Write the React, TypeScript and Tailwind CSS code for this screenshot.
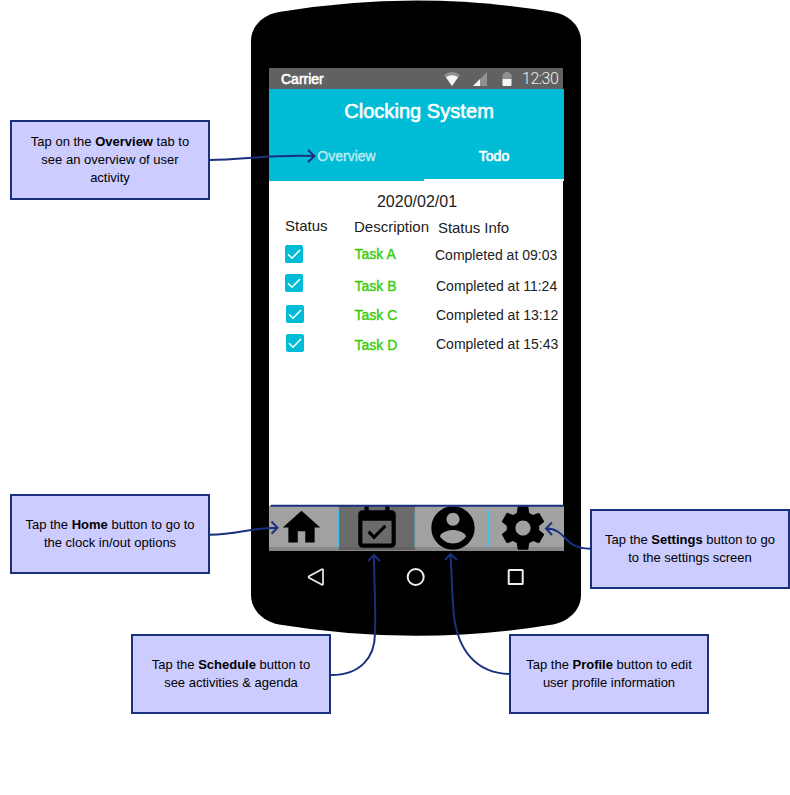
import type { ReactNode } from "react";

const NAVY = "#19307f";

const ICONS = {
  home: "M10 20v-6h4v6h5v-8h3L12 3 2 12h3v8z",
  schedule:
    "M16.53 11.06L15.47 10l-4.88 4.88-2.12-2.12-1.06 1.06L10.59 17l5.94-5.94zM19 3h-1V1h-2v2H8V1H6v2H5c-1.11 0-1.99.9-1.99 2L3 19c0 1.1.89 2 2 2h14c1.1 0 2-.9 2-2V5c0-1.1-.9-2-2-2zm0 16H5V8h14v11z",
  profile:
    "M12 2C6.48 2 2 6.48 2 12s4.48 10 10 10 10-4.48 10-10S17.52 2 12 2zm0 3c1.66 0 3 1.34 3 3s-1.34 3-3 3-3-1.34-3-3 1.34-3 3-3zm0 14.2c-2.5 0-4.71-1.28-6-3.22.03-1.99 4-3.08 6-3.08 1.99 0 5.97 1.09 6 3.08-1.29 1.94-3.5 3.22-6 3.22z",
  settings:
    "M19.43 12.98c.04-.32.07-.64.07-.98s-.03-.66-.07-.98l2.11-1.65c.19-.15.24-.42.12-.64l-2-3.46c-.12-.22-.39-.3-.61-.22l-2.49 1c-.52-.4-1.08-.73-1.69-.98l-.38-2.65C14.46 2.18 14.25 2 14 2h-4c-.25 0-.46.18-.49.42l-.38 2.65c-.61.25-1.17.59-1.69.98l-2.49-1c-.23-.09-.49 0-.61.22l-2 3.46c-.13.22-.07.49.12.64l2.11 1.65c-.04.32-.07.65-.07.98s.03.66.07.98l-2.11 1.65c-.19.15-.24.42-.12.64l2 3.46c.12.22.39.3.61.22l2.49-1c.52.4 1.08.73 1.69.98l.38 2.65c.03.24.24.42.49.42h4c.25 0 .46-.18.49-.42l.38-2.65c.61-.25 1.17-.59 1.69-.98l2.49 1c.23.09.49 0 .61-.22l2-3.46c.12-.22.07-.49-.12-.64l-2.11-1.65zM12 15.5c-1.93 0-3.5-1.57-3.5-3.5s1.57-3.5 3.5-3.5 3.5 1.57 3.5 3.5-1.57 3.5-3.5 3.5z",
};

function Glyph({ path, className }: { path: string; className: string }) {
  return (
    <svg viewBox="0 0 24 24" className={`shrink-0 ${className}`}>
      <path d={path} />
    </svg>
  );
}

function Callout({ className, children }: { className: string; children: ReactNode }) {
  return (
    <div
      className={`absolute flex h-20 w-[200px] items-center justify-center border-2 border-[#19307f] bg-[#ccccff] text-center text-[13px] leading-[18px] text-black ${className}`}
    >
      <p className="whitespace-nowrap">{children}</p>
    </div>
  );
}

function StatusBar() {
  return (
    <div className="flex h-[21px] w-[294px] items-center bg-[#616161] pl-3 text-white">
      <span className="w-[163px] text-sm leading-5 tracking-[0px] [-webkit-text-stroke:0.6px_white]">Carrier</span>
      <svg className="h-[14px] w-[70px] shrink-0" viewBox="0 0 70 14">
        <path d="M0 3Q8-3 16 3L8 14Z" fill="#919191" />
        <path d="M2 5.3Q8 1 14 5.3L8 14Z" fill="#f5f5f5" />
        <path d="M43 0V14H29Z" fill="#919191" />
        <path d="M36 7V14H29Z" fill="#f5f5f5" />
        <path d="M59.500 1.500h1.200V0h4.600v1.500h1.200q1 0 1 1V7h-9V2.500q0-1 1-1Z" fill="#919191" />
        <path d="M58.500 7h9v6q0 1-1 1h-7q-1 0-1-1Z" fill="#f5f5f5" />
      </svg>
      <span className="ml-[8px] whitespace-nowrap font-[Roboto,sans-serif] text-[16px] font-light leading-5 tracking-[-0.5px] text-[#eeeeee]">
        12:30
      </span>
    </div>
  );
}

function AppHeader() {
  return (
    <div className="h-[92px] w-[295px] bg-[#00bcd6] text-white">
      <h1 className="pl-[5px] pt-2 text-center text-xl leading-7 tracking-[0.050px] [-webkit-text-stroke:0.6px_white]">
        Clocking System
      </h1>
      <div className="mt-[6px] flex h-[50px] text-sm leading-[50px]">
        <div className="w-[155px] text-center text-white/60 [-webkit-text-stroke:0.5px_#ffffff99]">Overview</div>
        <div className="h-[50px] w-[140px] border-b-2 border-white text-center [-webkit-text-stroke:0.6px_white]">
          Todo
        </div>
      </div>
    </div>
  );
}

const TASKS = [
  { name: "Task A", time: "09:03", row: "h-[29px]", box: "mt-0", label: "mt-0", info: "mt-px ml-0" },
  { name: "Task B", time: "11:24", row: "h-[31px]", box: "mt-0", label: "mt-[3px]", info: "mt-[3px] ml-px" },
  { name: "Task C", time: "13:12", row: "h-[29px]", box: "mt-0 ml-px", label: "mt-px", info: "mt-px ml-px" },
  { name: "Task D", time: "15:43", row: "h-[29px]", box: "mt-0 ml-px", label: "mt-[2px]", info: "mt-px ml-px" },
];

function TaskList() {
  return (
    <div className="h-[324px] w-[294px] bg-white text-[#212121]">
      <div className="pl-[2px] pt-[11px] text-center text-base leading-5">2020/02/01</div>
      <div className="mt-[4px] flex h-[29px] whitespace-nowrap pl-4 text-[15px] leading-5">
        <span className="w-[69px]">Status</span>
        <span className="mt-px w-[84px]">Description</span>
        <span className="mt-[2px] tracking-[-0.050px]">Status Info</span>
      </div>
      {TASKS.map((t) => (
        <div key={t.name} className={`flex whitespace-nowrap pl-4 text-sm leading-[18px] ${t.row}`}>
          <div className="w-[69px]">
            <svg viewBox="0 0 18 18" className={`size-[18px] ${t.box}`}>
              <rect width="18" height="18" rx="2" fill="#00bcd6" />
              <path d="M3 9.300 7 13.200 15 5" fill="none" stroke="white" strokeWidth="1.6" />
            </svg>
          </div>
          <span className={`w-[81px] pl-[0.500px] text-[#38cc0c] [-webkit-text-stroke:0.4px_#38cc0c] ${t.label}`}>
            {t.name}
          </span>
          <span className={t.info}>Completed at {t.time}</span>
        </div>
      ))}
    </div>
  );
}

function BottomNav() {
  return (
    <div className="flex h-[46px] w-[295px] overflow-hidden bg-[linear-gradient(white_0_1px,#a1a1a1_1px_42px,#888888_42px)]">
      <div className="flex w-[70px] items-start pl-[10px]">
        <Glyph path={ICONS.home} className="size-[45px]" />
      </div>
      <div className="flex h-[45px] w-[76px] items-start bg-[linear-gradient(white_0_1px,#6b6b6b_1px_42px,#626262_42px)] pl-[12.700px]">
        <Glyph path={ICONS.schedule} className="mt-[-1.300px] size-[50px]" />
      </div>
      <div className="flex w-[73px] items-start pl-[12.300px]">
        <Glyph path={ICONS.profile} className="mt-[-2.600px] size-[52px]" />
      </div>
      <div className="flex w-[76px] items-start pl-[9.300px]">
        <Glyph path={ICONS.settings} className="mt-[-2.600px] size-[52px]" />
      </div>
    </div>
  );
}

function Phone() {
  return (
    <div className="absolute left-[251px] top-0 h-[637px] w-[331px]">
      <svg className="absolute inset-0" width="331" height="637" viewBox="0 0 331 637">
        <path d="M0 41C0 27 11 15 28 12Q165-11 302 12C319 15 330 27 330 41V595C330 609 319 621 302 624.500Q165 647 28 624.500C11 621 0 609 0 595Z" />
      </svg>
      <div className="relative pl-[18px] pt-[68px]">
        <StatusBar />
        <AppHeader />
        <TaskList />
        <BottomNav />
        <svg className="ml-[36px] mt-[15px] block" width="222" height="24" viewBox="0 0 222 24" fill="none" stroke="#eeeeee" strokeWidth="2" strokeLinejoin="round">
          <path d="M16.500 3.500Q18 2.700 18 4V18Q18 19.300 16.500 18.500L4 11.700Q3 11 4 10.300Z" strokeWidth="1.700" />
          <circle cx="110.700" cy="11" r="8" />
          <rect x="203.700" y="4" width="14" height="14" rx="0.500" />
        </svg>
      </div>
    </div>
  );
}

function Connectors() {
  return (
    <svg className="pointer-events-none absolute inset-0" width="790" height="795" viewBox="0 0 790 795" fill="none" stroke={NAVY} strokeWidth="2">
      <path d="M338.500 510V547M415.300 510V547M488.300 510V547" stroke="#43bfe9" strokeWidth="1.300" />
      <path d="M270.500 505.800H564" />
      <path d="M210 160C244 160 265 154.500 314 156M308 150 314.500 156.200 308 162" />
      <path d="M210 534.700C238 534.700 248 528 277 527.700M271.500 521.500 277.500 527.700 271.500 533.700" />
      <path d="M331 675C360 675 375 658 375 633C376 605 374 585 374 555M368 561 374 555 380 561" />
      <path d="M509 674C476 673 458 650 454 616C452 598 452 578 450.500 554M445 560 450.500 554 457 560" />
      <path d="M590 548.700C562 548.700 568 529 546 528.500M552 522.500 546 528.500 552 535" />
    </svg>
  );
}

export default function App() {
  return (
    <main className="relative h-[795px] w-[790px] overflow-hidden bg-white font-['Liberation_Sans',Arial,sans-serif]">
      <Phone />
      <Callout className="left-[10px] top-[120px]">
        Tap on the <b>Overview</b> tab to
        <br />
        see an overview of user
        <br />
        activity
      </Callout>
      <Callout className="left-[10px] top-[494px]">
        Tap the <b>Home</b> button to go to
        <br />
        the clock in/out options
      </Callout>
      <Callout className="left-[131px] top-[634px]">
        Tap the <b>Schedule</b> button to
        <br />
        see activities &amp; agenda
      </Callout>
      <Callout className="left-[509px] top-[634px]">
        Tap the <b>Profile</b> button to edit
        <br />
        user profile information
      </Callout>
      <Callout className="left-[590px] top-[509px]">
        Tap the <b>Settings</b> button to go
        <br />
        to the settings screen
      </Callout>
      <Connectors />
    </main>
  );
}
